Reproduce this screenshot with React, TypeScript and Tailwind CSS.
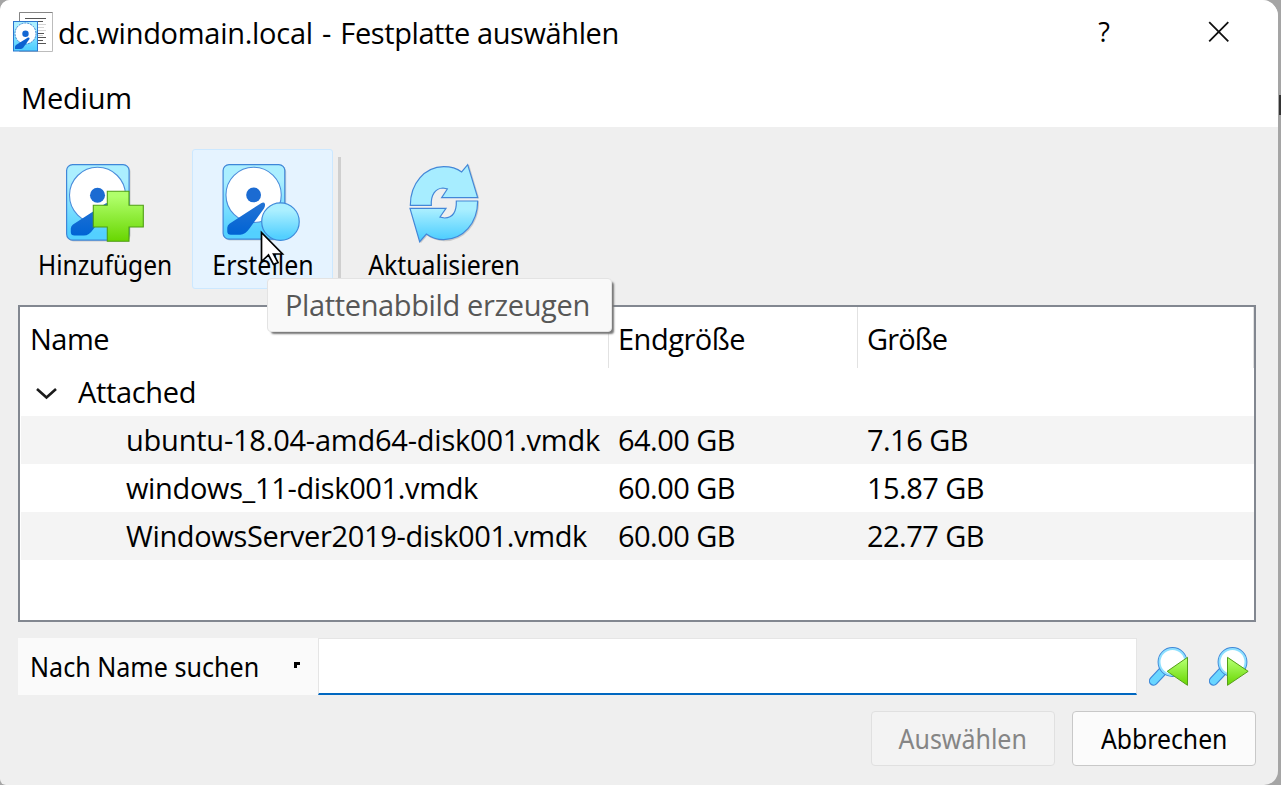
import React from "react";

const segoe = "font-['Open_Sans',sans-serif] text-[29px] whitespace-pre text-black";
const tahoma = "font-['Noto_Sans',sans-serif] text-[27.5px] whitespace-pre text-black";

function Defs() {
  return (
    <svg className="absolute size-0" aria-hidden="true">
      <defs>
        <linearGradient id="aqua" x1="0" y1="0" x2="0" y2="1">
          <stop offset="0.2" stopColor="#abefff" />
          <stop offset="0.9" stopColor="#53d0ff" />
        </linearGradient>
        <linearGradient id="blue" x1="0" y1="0" x2="0" y2="1">
          <stop offset="0" stopColor="#2473d4" />
          <stop offset="1" stopColor="#0063d4" />
        </linearGradient>
        <linearGradient id="green" x1="0" y1="0" x2="0" y2="1">
          <stop offset="0.1" stopColor="#b0ff6b" />
          <stop offset="1" stopColor="#68d600" />
        </linearGradient>
      </defs>
    </svg>
  );
}

function Drive() {
  return (
    <>
      <rect x="1.5" y="1.5" width="63" height="76" rx="6" fill="#888" opacity="0.35" />
      <rect x="0.6" y="0.6" width="62.5" height="75.5" rx="6" fill="url(#aqua)" stroke="#3f86d8" strokeWidth="1.2" />
      <circle cx="31.5" cy="31.3" r="28" fill="#fff" stroke="#4d8ddb" strokeWidth="1.1" />
      <circle cx="31.5" cy="31.3" r="7.5" fill="#1b6bd2" />
      <path d="M7 60.5 39.5 39.4Q42.2 38.2 43 40.5Q43.3 43 42 45L27.5 65Q23 71.6 18 71.6H8.5Q4.8 71.6 4.8 68V64.5Q5 62 7 60.5Z" fill="url(#blue)" />
    </>
  );
}

function AddIcon() {
  return (
    <svg className="ml-[2px]" width="80" height="79" viewBox="0 0 80 79">
      <Drive />
      <path d="M41.3 27.3H63V41.3H77.3V63H63V77.3H41.3V63H27.3V41.3H41.3Z" fill="url(#green)" stroke="#4f9e14" strokeWidth="1.1" />
    </svg>
  );
}

function CreateIcon() {
  return (
    <svg className="mr-[2px]" width="80" height="79" viewBox="0 0 80 79">
      <Drive />
      <circle cx="58.7" cy="58.4" r="19" fill="url(#aqua)" stroke="#3f8ada" strokeWidth="1.2" />
    </svg>
  );
}

function RefreshIcon() {
  return (
    <svg width="70" height="80" viewBox="178 54 210 240">
      <g fill="none" stroke="#888" strokeOpacity="0.35" strokeWidth="5" transform="translate(2 2)">
        <path d="M384 158 354 58M384 167C384 235 340 284 282 284C265 284 245 278 230 267L210 290" />
      </g>
      <g stroke="#4387d8" strokeWidth="3.6">
        <path d="M182 181H245C243 149 257 130 280 129L293 132 276 158H384L354 59 336 81C320 69 300 65 282 65C225 66 182 115 182 181Z" fill="#a7edff" />
        <path d="M384 168H320C321 200 308 218 285 219L271 216 289 190H181L210 290 230 267C245 278 265 284 282 284C340 284 384 235 384 168Z" fill="url(#aqua)" />
      </g>
    </svg>
  );
}

function SearchIcon({ next = false }: { next?: boolean }) {
  return (
    <svg width="41" height="41" viewBox="56.5 48 123 123">
      <path d="M70 153 98 123" stroke="#3d87d8" strokeWidth="28" strokeLinecap="round" />
      <path d="M70 153 98 123" stroke="#69d6ff" strokeWidth="21" strokeLinecap="round" />
      <circle cx="127" cy="96" r="39" fill="#fff" stroke="#3d87d8" strokeWidth="11.5" />
      <circle cx="127" cy="96" r="39" fill="#fff" stroke="#8fe0ff" strokeWidth="6" />
      {next ? (
        <path d="M112 82 174 124 112 166Z" fill="url(#green)" stroke="#559f19" strokeWidth="3" />
      ) : (
        <path d="M172 82V166L111 124Z" fill="url(#green)" stroke="#559f19" strokeWidth="3" />
      )}
    </svg>
  );
}

function WindowIcon() {
  return (
    <svg width="41" height="41" viewBox="0 0 41 41">
      <path d="M6.5 39.5V.5H39.5V39.5Z" fill="#fff" stroke="#bcbcbc" />
      <path d="M6.5 10V.5H39.5" fill="none" stroke="#858585" />
      <path d="M12 6.5H33M25 9.5H30M25 21.5H31M25 25.5H33M25 28.5H30M25 31.5H33" stroke="#555" />
      <path d="M25 12.5H33M25 15.5H31M25 18.5H33M25 23.5H30" stroke="#d5d5d5" />
      <rect x="0.5" y="9.5" width="24" height="29.5" fill="url(#aqua)" stroke="#2b76cf" />
      <circle cx="12.5" cy="21.5" r="10.5" fill="#fff" stroke="#3b82d5" strokeDasharray="2 1" />
      <circle cx="12.5" cy="21.8" r="3.2" fill="#1467d2" />
      <path d="M3 33 15 25.5Q17 25 16.5 27L10 36Q9 37 7.5 37H2V35Q2 34 3 33Z" fill="#0c62d1" />
    </svg>
  );
}

const rows = [
  ["ubuntu-18.04-amd64-disk001.vmdk", "64.00 GB", "7.16 GB"],
  ["windows_11-disk001.vmdk", "60.00 GB", "15.87 GB"],
  ["WindowsServer2019-disk001.vmdk", "60.00 GB", "22.77 GB"],
];
const rowTracking = ["tracking-[-0.22px]", "tracking-[-0.35px]", "tracking-[-0.35px]"];

export default function App() {
  return (
    <div className="relative h-[785px] w-[1281px] overflow-hidden bg-[#a5a5a5]">
      <Defs />
      <div className="flex h-[785px] w-[1278px] flex-col overflow-hidden rounded-tl-[10px] rounded-tr-[16px] rounded-br-[14px] rounded-bl-[6px] bg-[#efefef]">
        <header className="h-[127px] shrink-0 bg-white">
          <div className="flex h-[66px] items-start pl-[13px]">
            <div className="pt-[12px]"><WindowIcon /></div>
            <h1 className={`${segoe} ml-[4px] w-[1031px] pt-[13px] leading-[40px] tracking-[-0.4px]`}>
              <span className="tracking-[-0.28px] [word-spacing:2px]">dc.windomain.local - </span>Festplatte auswählen
            </h1>
            <button className="w-[30px] pt-[12px] text-center font-['Open_Sans',sans-serif] text-[27px] leading-[40px] text-black">?</button>
            <button className="ml-[89px] pt-[21px]">
              <svg className="block" width="22" height="22" viewBox="0 0 22 22"><path d="M1.2 1.2 20.3 20.3M20.3 1.2 1.2 20.3" stroke="#111" strokeWidth="1.8" /></svg>
            </button>
          </div>
          <nav className={`${segoe} pl-[21px] pt-[12px] leading-[40px] tracking-[-0.2px]`}>Medium</nav>
        </header>

        <div className="flex h-[178px] shrink-0 pl-[18px] pt-[22px]">
          <button className="flex w-[174px] flex-col items-center pt-[15px]">
            <AddIcon />
            <span className={`${tahoma} -mt-px scale-x-[0.892] leading-[46px]`}>Hinzufügen</span>
          </button>
          <button className="flex h-[140px] w-[141px] flex-col items-center rounded-[3px] border border-[#cce8ff] bg-[#e5f3ff] pt-[14px]">
            <CreateIcon />
            <span className={`${tahoma} scale-x-[0.905] leading-[46px]`}>Erstellen</span>
          </button>
          <div className="ml-[5px] mt-[8px] h-[124px] w-[3px] bg-[#cfcfcf]" />
          <button className="flex w-[205px] flex-col items-center pt-[14px]">
            <RefreshIcon />
            <span className={`${tahoma} -mt-px scale-x-[0.903] leading-[46px]`}>Aktualisieren</span>
          </button>
        </div>

        <section className="ml-[18px] h-[317px] w-[1238px] shrink-0 border-2 border-[#828790] bg-white">
          <div className={`${segoe} flex h-[61px] leading-[64px] tracking-[-0.5px]`}>
            <div className="w-[589px] border-r border-[#e2e2e2] pl-[10px]">Name</div>
            <div className="w-[249px] border-r border-[#e2e2e2] pl-[9px]">Endgröße</div>
            <div className="flex-1 border-r border-[#e2e2e2] pl-[9px] tracking-[-0.9px]">Größe</div>
          </div>
          <div className={`${segoe} flex h-[48px] items-center leading-[48px] tracking-[-0.35px]`}>
            <svg className="ml-[15px] mt-[4px]" width="24" height="14" viewBox="0 0 24 14"><path d="M2 2 11.5 10.5 21 2" fill="none" stroke="#1b1b1b" strokeWidth="2.6" /></svg>
            <span className="ml-[19px]">Attached</span>
          </div>
          {rows.map(([name, size, used], i) => (
            <div key={name} className={`${segoe} ml-px flex h-[48px] leading-[48px] ${i % 2 ? "bg-white" : "bg-[#f4f4f4]"}`}>
              <div className={`w-[588px] pl-[105px] ${rowTracking[i]}`}>{name}</div>
              <div className="w-[249px] pl-[9px] tracking-[-0.55px]">{size}</div>
              <div className="pl-[9px] tracking-[-0.55px]">{used}</div>
            </div>
          ))}
        </section>

        <div className="mt-[16px] flex h-[57px] shrink-0 pl-[18px]">
          <button className="flex w-[300px] items-start bg-[#fafafa] pl-[12px]">
            <span className={`${tahoma} w-[250px] origin-left scale-x-[0.912] text-left leading-[58px]`}>Nach Name suchen</span>
            <svg className="ml-[14px] mt-[24px]" width="6" height="6" viewBox="0 0 6 6"><path d="M0 0H6V3H3V6H0Z" fill="#000" /></svg>
          </button>
          <input className="h-[57px] w-[819px] border border-b-2 border-[#e5e5e5] border-b-[#0067c0] bg-white outline-none" />
          <button className="ml-[12px] mt-[8px] size-[41px]"><SearchIcon /></button>
          <button className="ml-[19px] mt-[8px] size-[41px]"><SearchIcon next /></button>
        </div>

        <footer className="mt-[16px] flex gap-[17px] pl-[871px]">
          <button className={`${tahoma} h-[55px] w-[184px] rounded-[4px] border border-[#e0e0e0] bg-[#f3f3f3] leading-[53px]`}><span className="inline-block scale-x-[0.908] text-[#858585]">Auswählen</span></button>
          <button className={`${tahoma} h-[55px] w-[184px] rounded-[4px] border border-[#c8c8c8] bg-[#fbfbfb] leading-[53px]`}><span className="inline-block scale-x-[0.9]">Abbrechen</span></button>
        </footer>
      </div>

      <div className={`${segoe} absolute left-[267px] top-[278px] h-[54px] w-[345px] rounded-[4px] border border-[#e3e3e3] bg-[#f9f9f9] pl-[17px] leading-[52px] tracking-[-0.36px] shadow-[3px_3px_2px_-1px_#777]`}>
        <span className="text-[#575757]">Plattenabbild erzeugen</span>
      </div>
      <svg className="absolute left-[260px] top-[229px]" width="28" height="40" viewBox="0 0 28 40">
        <path d="M1.5 3.5V32.5L8.5 26 13.5 35.5 18 33.5 13.5 25H22.5Z" fill="#fff" stroke="#000" strokeWidth="1.7" />
      </svg>
      <div className="absolute left-[1279px] top-[95px] h-[20px] w-[2px] bg-[#333]" />
    </div>
  );
}
